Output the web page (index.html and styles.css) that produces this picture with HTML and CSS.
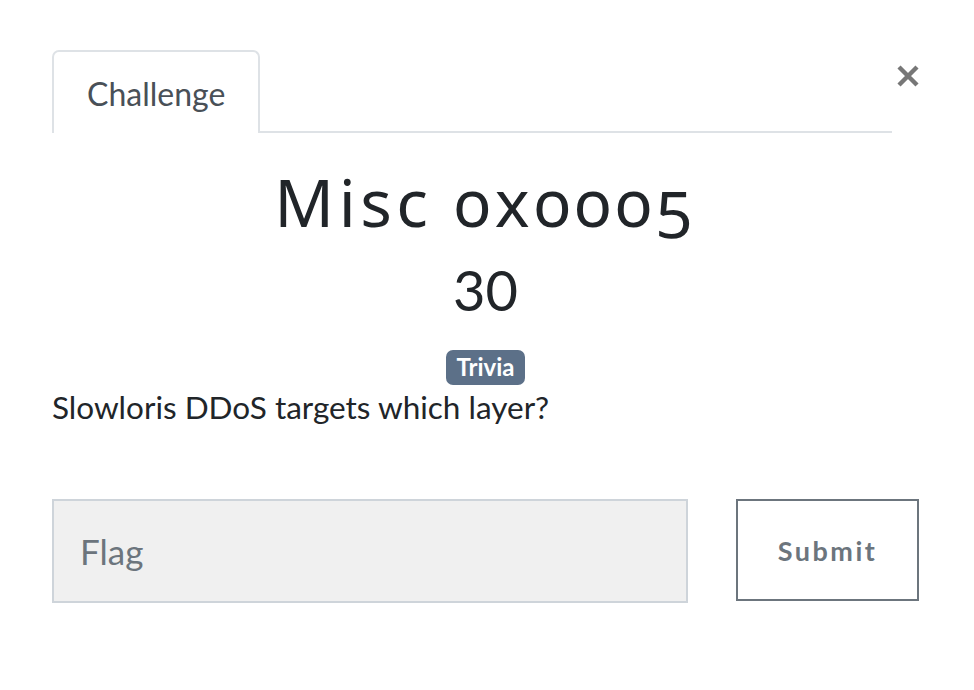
FILE: index.html
```html
<!DOCTYPE html>
<html>
<head>
<meta charset="utf-8">
<link rel="stylesheet" href="styles.css">
</head>
<body>
<div class="modal-body">
  <div class="header">
    <ul class="nav-tabs">
      <li class="tab active">Challenge</li>
    </ul>
    <button class="close" aria-label="Close">
      <svg width="24" height="24" viewBox="0 0 24 24"><path d="M3 3 L21 21 M21 3 L3 21" stroke="#777" stroke-width="4.4" stroke-linecap="butt"/></svg>
    </button>
  </div>
  <h1 class="challenge-name">Misc 0x0005</h1>
  <h3 class="challenge-value">30</h3>
  <div class="tags"><span class="badge">Trivia</span></div>
  <p class="description">Slowloris DDoS targets which layer?</p>
  <form class="submit-row">
    <input class="flag-input" type="text" placeholder="Flag">
    <button class="submit-btn" type="button">Submit</button>
  </form>
</div>
</body>
</html>
```
FILE: styles.css
```css
html, body {
  margin: 0;
  padding: 0;
  background: #fff;
}
body {
  font-family: Lato, "Noto Sans", sans-serif;
  color: #212529;
}
.modal-body {
  padding: 50px 55px 0 52px;
}
.header {
  display: flex;
  align-items: flex-start;
}
.nav-tabs {
  flex: 1;
  list-style: none;
  margin: 0;
  padding: 0;
  display: flex;
  border-bottom: 2px solid #dee2e6;
}
.tab {
  font-size: 32px;
  color: #495057;
  box-sizing: border-box;
  padding: 2px 33px 0;
  display: flex;
  align-items: center;
  border: 2px solid #dee2e6;
  border-bottom: none;
  border-radius: 7px 7px 0 0;
  margin-bottom: -2px;
  background: #fff;
  height: 83px;
}
.close {
  width: 28px;
  margin: 0;
  padding: 0;
  border: none;
  background: none;
  display: flex;
  justify-content: flex-end;
  margin-top: 14px;
  margin-right: -1px;
}
.challenge-name {
  font-family: "Noto Sans", Lato, sans-serif;
  font-weight: 400;
  font-size: 66px;
  letter-spacing: 4.5px;
  font-variant-numeric: oldstyle-nums;
  text-align: center;
  margin: 26px 0 0;
  line-height: 84px;
  color: #212529;
}
.challenge-value {
  font-size: 56px;
  font-weight: 400;
  text-align: center;
  margin: 7px 0 0;
  line-height: 80px;
}
.tags {
  text-align: center;
  margin-top: 20px;
  line-height: 0;
}
.badge {
  display: inline-block;
  background: #5c7088;
  color: #fff;
  font-weight: 700;
  font-size: 24px;
  padding: 4px 11px 6px;
  border-radius: 7px;
  line-height: 25px;
}
.description {
  font-size: 31.5px;
  margin: 0;
  line-height: 44px;
  margin-top: 0;
}
.submit-row {
  display: flex;
  margin-top: 70px;
  gap: 48px;
  align-items: flex-start;
}
.flag-input {
  flex: 0 0 636px;
  height: 104px;
  box-sizing: border-box;
  background: #f0f0f0;
  border: 2px solid #ced4da;
  font-family: Lato, sans-serif;
  font-size: 35px;
  padding: 0 26px;
  color: #495057;
  margin: 0;
}
.flag-input::placeholder {
  color: #6c757d;
}
.submit-btn {
  flex: 1;
  height: 102px;
  box-sizing: border-box;
  background: #fff;
  border: 2px solid #6c757d;
  color: #6c757d;
  font-family: Lato, sans-serif;
  font-weight: 700;
  font-size: 27px;
  letter-spacing: 2.5px;
  margin: 0;
  padding: 0;
}
```
